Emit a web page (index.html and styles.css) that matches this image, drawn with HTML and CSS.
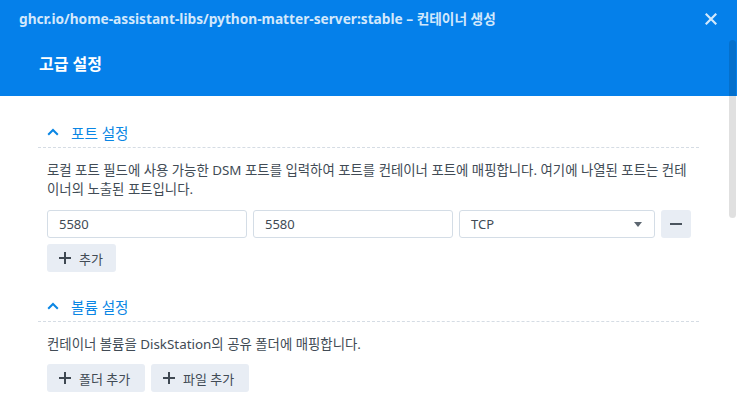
FILE: index.html
```html
<!DOCTYPE html>
<html lang="ko">
<head>
<meta charset="utf-8">
<link rel="stylesheet" href="styles.css">
</head>
<body>
<div class="dialog">
  <div class="header">
    <div class="titlebar">
      <span class="title">ghcr.io/home-assistant-libs/python-matter-server:stable – 컨테이너 생성</span>
      <svg class="close" width="12" height="12" viewBox="0 0 12 12"><path d="M1.5 1.5L10.5 10.5M10.5 1.5L1.5 10.5" stroke="#d2e8fc" stroke-width="2.2" stroke-linecap="square"/></svg>
    </div>
    <div class="subtitle">고급 설정</div>
  </div>
  <div class="content">
    <div class="section">
      <div class="sec-head">
        <svg class="chev" width="12" height="8" viewBox="0 0 12 8"><path d="M1.2 6.8L6 2L10.8 6.8" fill="none" stroke="#0a86e4" stroke-width="2"/></svg>
        <span>포트 설정</span>
      </div>
      <p class="desc">로컬 포트 필드에 사용 가능한 DSM 포트를 입력하여 포트를 컨테이너 포트에 매핑합니다. 여기에 나열된 포트는 컨테이너의 노출된 포트입니다.</p>
      <div class="port-row">
        <div class="field w200">5580</div>
        <div class="field w200">5580</div>
        <div class="field select">TCP<svg class="caret" width="8" height="5" viewBox="0 0 8 5"><path d="M0 0H8L4 5Z" fill="#5c6670"/></svg></div>
        <div class="btn icon-btn"><svg width="12" height="2" viewBox="0 0 12 2"><rect width="12" height="2" fill="#4a545e"/></svg></div>
      </div>
      <div class="btn-row">
        <div class="btn"><svg class="plus" width="12" height="12" viewBox="0 0 12 12"><path d="M0 6H12M6 0V12" stroke="#3f4852" stroke-width="2"/></svg>추가</div>
      </div>
    </div>
    <div class="section second">
      <div class="sec-head">
        <svg class="chev" width="12" height="8" viewBox="0 0 12 8"><path d="M1.2 6.8L6 2L10.8 6.8" fill="none" stroke="#0a86e4" stroke-width="2"/></svg>
        <span>볼륨 설정</span>
      </div>
      <p class="desc">컨테이너 볼륨을 DiskStation의 공유 폴더에 매핑합니다.</p>
      <div class="btn-row vol">
        <div class="btn w98"><svg class="plus" width="12" height="12" viewBox="0 0 12 12"><path d="M0 6H12M6 0V12" stroke="#3f4852" stroke-width="2"/></svg>폴더 추가</div>
        <div class="btn w98"><svg class="plus" width="12" height="12" viewBox="0 0 12 12"><path d="M0 6H12M6 0V12" stroke="#3f4852" stroke-width="2"/></svg>파일 추가</div>
      </div>
    </div>
  </div>
  <div class="scroll-thumb"></div>
</div>
</body>
</html>
```
FILE: styles.css
```css
html, body {
  margin: 0;
  padding: 0;
}
body {
  width: 737px;
  height: 410px;
  overflow: hidden;
  background: #ffffff;
  font-family: "Noto Sans", "Noto Sans CJK KR", sans-serif;
  color: #414b55;
}
.dialog {
  position: relative;
  width: 737px;
  height: 410px;
}
.header {
  background: #0580ea;
  height: 96px;
  box-sizing: border-box;
  padding-top: 9px;
}
.titlebar {
  display: flex;
  align-items: center;
  justify-content: space-between;
  padding: 0 20px 0 19px;
  height: 20px;
}
.title {
  font-size: 13.7px;
  font-weight: 700;
  color: #d2e8fc;
  line-height: 20px;
  white-space: nowrap;
}
.close {
  display: block;
}
.subtitle {
  margin-top: 24px;
  padding-left: 39px;
  font-size: 16px;
  font-weight: 700;
  color: #ffffff;
  line-height: 22px;
}
.content {
  padding: 22px 38px 0 38px;
  width: 661px;
}
.section.second {
  margin-top: 20px;
}
.sec-head {
  height: 30px;
  box-sizing: border-box;
  border-bottom: 1px dashed #d5dce4;
  display: flex;
  align-items: center;
  padding-left: 9px;
  gap: 12px;
  font-size: 14.6px;
  color: #0a86e4;
  padding-bottom: 1px;
}
.chev {
  display: block;
}
.desc {
  margin: 13px 8px 0 9px;
  font-size: 13.4px;
  line-height: 19px;
  color: #414b55;
}
.port-row {
  display: flex;
  gap: 6px;
  margin: 11px 0 0 9px;
}
.field {
  height: 28px;
  box-sizing: border-box;
  border: 1px solid #d4dde6;
  border-radius: 3px;
  padding: 0 11px;
  display: flex;
  align-items: center;
  font-size: 13px;
  color: #414b55;
}
.w200 { width: 200px; }
.select {
  width: 196px;
  justify-content: space-between;
  padding-right: 12px;
}
.caret { display: block; }
.btn {
  height: 28px;
  box-sizing: border-box;
  background: #e8edf4;
  border-radius: 3px;
  display: flex;
  align-items: center;
  padding: 0 13px 0 12px;
  gap: 8px;
  font-size: 13px;
  color: #414b55;
}
.icon-btn {
  width: 30px;
  padding: 0;
  justify-content: center;
}
.btn-row {
  display: flex;
  gap: 6px;
  margin: 6px 0 0 9px;
}
.btn-row.vol {
  margin-top: 10px;
}
.w98 { width: 98px; }
.plus { display: block; }
.scroll-thumb {
  position: absolute;
  left: 729px;
  top: 40px;
  width: 7px;
  height: 178px;
  border-radius: 4px;
  background: rgba(0, 0, 0, 0.12);
}
```
